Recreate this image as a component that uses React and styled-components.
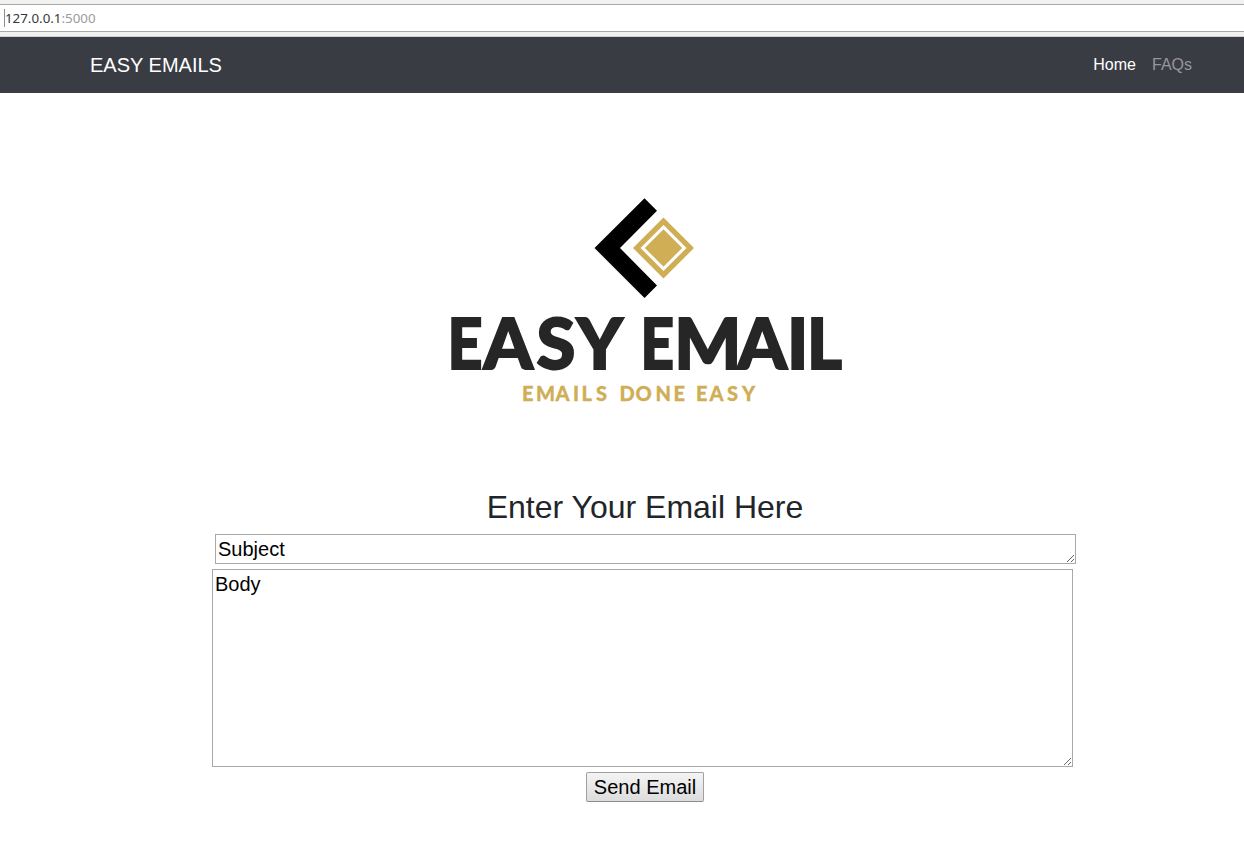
import React from "react";
import styled, { createGlobalStyle } from "styled-components";

const GlobalStyle = createGlobalStyle`
  * { box-sizing: border-box; }
  body {
    margin: 0;
    background: #fff;
    color: #212529;
    font-family: "Liberation Sans", Arial, sans-serif;
    font-size: 16px;
    line-height: 1.5;
    overflow: hidden;
  }
`;

const AddressBar = styled.div`
  height: 37px;
  padding-top: 4px;
  background: #f1f1ef;
  border-bottom: 1px solid #d2d0cd;
`;

const AddressField = styled.div`
  display: flex;
  align-items: center;
  height: 28px;
  padding-left: 4px;
  background: #fff;
  border-top: 1px solid #a9a9a7;
  border-bottom: 1px solid #a9a9a7;
  font-family: "Noto Sans", "Open Sans", sans-serif;
  font-size: 13.33px;
  line-height: 18px;
  color: #33393b;
`;

const Caret = styled.span`
  width: 1px;
  height: 18px;
  background: #8d8d8d;
`;

const Port = styled.span`
  color: #999c9d;
`;

const Navbar = styled.nav`
  display: flex;
  align-items: center;
  justify-content: space-between;
  height: 56px;
  padding: 0 52px 0 90px;
  background: #3a3c44;
`;

const Brand = styled.a`
  color: #fff;
  font-size: 20px;
  line-height: 30px;
`;

const NavLinks = styled.div`
  display: flex;
  gap: 16px;
`;

const NavLink = styled.a`
  color: ${(p) => (p.$active ? "#fff" : "#96979b")};
  line-height: 24px;
`;

const Main = styled.main`
  display: flex;
  flex-direction: column;
  align-items: center;
  padding: 97px 0 0 46px;
`;

const Logo = styled.svg`
  display: block;
  width: 410px;
  height: 220px;
`;

const LogoName = styled.text`
  font-family: Lato, sans-serif;
  font-weight: 900;
  font-size: 70.5px;
  fill: #262626;
  stroke: #262626;
  stroke-width: 1.9px;
`;

const LogoTagline = styled.text`
  font-family: Lato, sans-serif;
  font-weight: 900;
  font-size: 20px;
  fill: #cfae55;
  stroke: #cfae55;
  stroke-width: 0.3px;
`;

const Title = styled.h2`
  margin: 78px 0 8px;
  font-size: 32px;
  font-weight: 400;
  line-height: 38px;
`;

const Field = styled.textarea`
  display: block;
  width: 861px;
  height: ${(p) => p.$height}px;
  margin: ${(p) => p.$margin};
  padding: 2px;
  border: 1px solid #a9a9a9;
  border-radius: 0;
  background: #fff;
  color: #000;
  font: 20px/24px "Liberation Sans", Arial, sans-serif;
  overflow: hidden;
  outline: none;
`;

const SendButton = styled.button`
  width: 118px;
  height: 30px;
  margin-top: 5px;
  padding: 0;
  border: 1px solid #a0a0a0;
  border-bottom-color: #8c8c8c;
  border-radius: 2px;
  background: linear-gradient(#f4f4f4, #dcdcdc);
  color: #000;
  font: 20px/24px "Liberation Sans", Arial, sans-serif;
`;

export default function App() {
  return (
    <>
      <GlobalStyle />
      <AddressBar>
        <AddressField>
          <Caret />
          <span>127.0.0.1<Port>:5000</Port></span>
        </AddressField>
      </AddressBar>
      <Navbar>
        <Brand>EASY EMAILS</Brand>
        <NavLinks>
          <NavLink $active>Home</NavLink>
          <NavLink>FAQs</NavLink>
        </NavLinks>
      </Navbar>
      <Main>
        <Logo viewBox="440 190 410 220">
          <path d="M644.5 198.2 L657 210.8 L620 248 L657 285.5 L644.5 298 L594.5 248 Z" fill="#000" />
          <path d="M663.5 217.5 L694 248 L663.5 278.5 L633 248 Z" fill="#cfae55" />
          <path d="M663.5 227.2 L684.3 248 L663.5 268.8 L642.7 248 Z" fill="none" stroke="#fff" strokeWidth="3.1" />
          <LogoName y="369.3">
            <tspan x="447.5" textLength="35" lengthAdjust="spacingAndGlyphs">E</tspan>
            <tspan x="483.5 536.5 576.5 625">ASY </tspan>
            <tspan x="640.5" textLength="33.5" lengthAdjust="spacingAndGlyphs">E</tspan>
            <tspan x="674.2 737.5 787">MAI</tspan>
            <tspan x="807" textLength="35" lengthAdjust="spacingAndGlyphs">L</tspan>
          </LogoName>
          <LogoTagline y="400.5" x="522 536 555.5 573 581.5 596 608 619.5 635.5 655.5 673.5 684 696 709.5 727 742">EMAILS DONE EASY</LogoTagline>
        </Logo>
        <Title>Enter Your Email Here</Title>
        <Field $height={30} $margin="0 0 5px 1px" defaultValue="Subject" spellCheck={false} />
        <Field $height={198} $margin="0 5px 0 0" defaultValue="Body" spellCheck={false} />
        <SendButton>Send Email</SendButton>
      </Main>
    </>
  );
}
